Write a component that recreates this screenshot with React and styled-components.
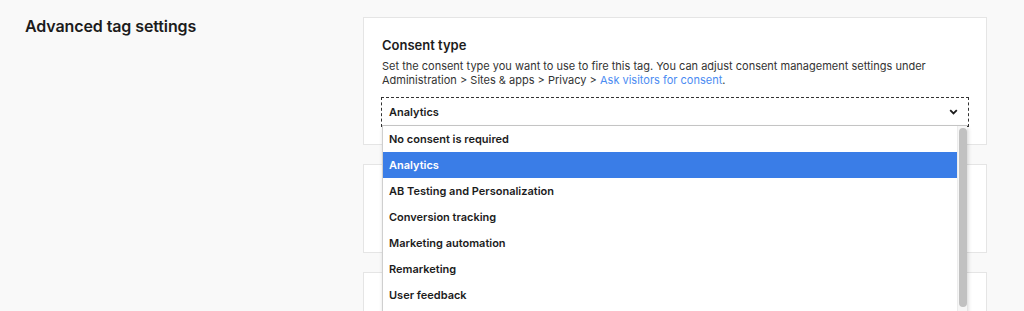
import React from "react";
import styled, { createGlobalStyle } from "styled-components";

const Global = createGlobalStyle`
  html, body { margin: 0; padding: 0; background: #f9f9f9; }
  body { font-family: Inter, "Noto Sans", sans-serif; color: #1f1f1f; overflow: hidden; }
  * { box-sizing: border-box; }
`;

const Page = styled.div`
  display: grid;
  grid-template-columns: 363px 624px;
  padding-top: 17px;
  height: 311px;
  overflow: hidden;
`;

const SideTitle = styled.h2`
  margin: 0;
  padding: 0 0 0 25px;
  font-size: 16px;
  font-weight: 600;
  line-height: 20px;
  margin-top: -1px;
  letter-spacing: -0.1px;
  color: #1c1c1c;
`;

const Cards = styled.div`
  display: flex;
  flex-direction: column;
  gap: 19px;
`;

const Card = styled.section`
  position: relative;
  background: #fff;
  border: 1px solid #e5e5e5;
  height: ${(p) => p.$h}px;
  padding: 19px 17px 0 18px;
`;

const CardTitle = styled.h3`
  margin: 0;
  font-size: 13px;
  font-weight: 600;
  line-height: 16px;
  color: #1c1c1c;
`;

const Desc = styled.p`
  margin: 6px 0 0;
  font-size: 11px;
  line-height: 14px;
  color: #333;
`;

const Link = styled.a`
  color: #4b8cf2;
  text-decoration: none;
`;

const SelectWrap = styled.div`
  position: relative;
  margin: 10px 0 0 -1px;
  border: 1px dashed #333;
  height: 30px;
`;

const SelectBox = styled.div`
  display: flex;
  align-items: center;
  justify-content: space-between;
  height: 28px;
  padding: 0 10px 0 7px;
  border-bottom: 1px solid #c8c8c8;
  background: #fff;
  font-size: 11px;
  font-weight: 600;
  color: #1c1c1c;
`;

const List = styled.div`
  position: absolute;
  left: 0;
  top: 28px;
  width: 585px;
  height: 200px;
  display: flex;
  background: #fff;
  border-left: 1px solid #cfcfcf;
  box-shadow: 1px 2px 4px rgba(0, 0, 0, 0.18);
  z-index: 2;
`;

const Options = styled.div`
  flex: 1;
  display: flex;
  flex-direction: column;
`;

const Option = styled.div`
  height: 26px;
  flex: none;
  display: flex;
  align-items: center;
  padding-left: 6px;
  font-size: 11px;
  font-weight: 600;
  color: ${(p) => (p.$active ? "#fff" : "#1c1c1c")};
  background: ${(p) => (p.$active ? "#3a7de7" : "transparent")};
`;

const Track = styled.div`
  width: 10px;
  flex: none;
  background: #f6f6f6;
  border-left: 1px solid #ececec;
  padding: 2px 1px;
`;

const Thumb = styled.div`
  height: 179px;
  width: 8px;
  border-radius: 4px;
  background: #c1c1c1;
`;

const options = [
  "No consent is required",
  "Analytics",
  "AB Testing and Personalization",
  "Conversion tracking",
  "Marketing automation",
  "Remarketing",
  "User feedback",
];

function Chevron() {
  return (
    <svg width="9" height="6" viewBox="0 0 9 6">
      <path d="M1.2 1.2 L4.5 4.4 L7.8 1.2" fill="none" stroke="#1c1c1c" strokeWidth="1.8" />
    </svg>
  );
}

export default function App() {
  return (
    <>
      <Global />
      <Page>
        <SideTitle>Advanced tag settings</SideTitle>
        <Cards>
          <Card $h={128}>
            <CardTitle>Consent type</CardTitle>
            <Desc>
              Set the consent type you want to use to fire this tag. You can adjust consent management settings under
              Administration &gt; Sites &amp; apps &gt; Privacy &gt; <Link href="#">Ask visitors for consent</Link>.
            </Desc>
            <SelectWrap>
              <SelectBox>
                <span>Analytics</span>
                <Chevron />
              </SelectBox>
              <List>
                <Options>
                  {options.map((o) => (
                    <Option key={o} $active={o === "Analytics"}>
                      {o}
                    </Option>
                  ))}
                </Options>
                <Track>
                  <Thumb />
                </Track>
              </List>
            </SelectWrap>
          </Card>
          <Card $h={89} />
          <Card $h={89} />
        </Cards>
      </Page>
    </>
  );
}
